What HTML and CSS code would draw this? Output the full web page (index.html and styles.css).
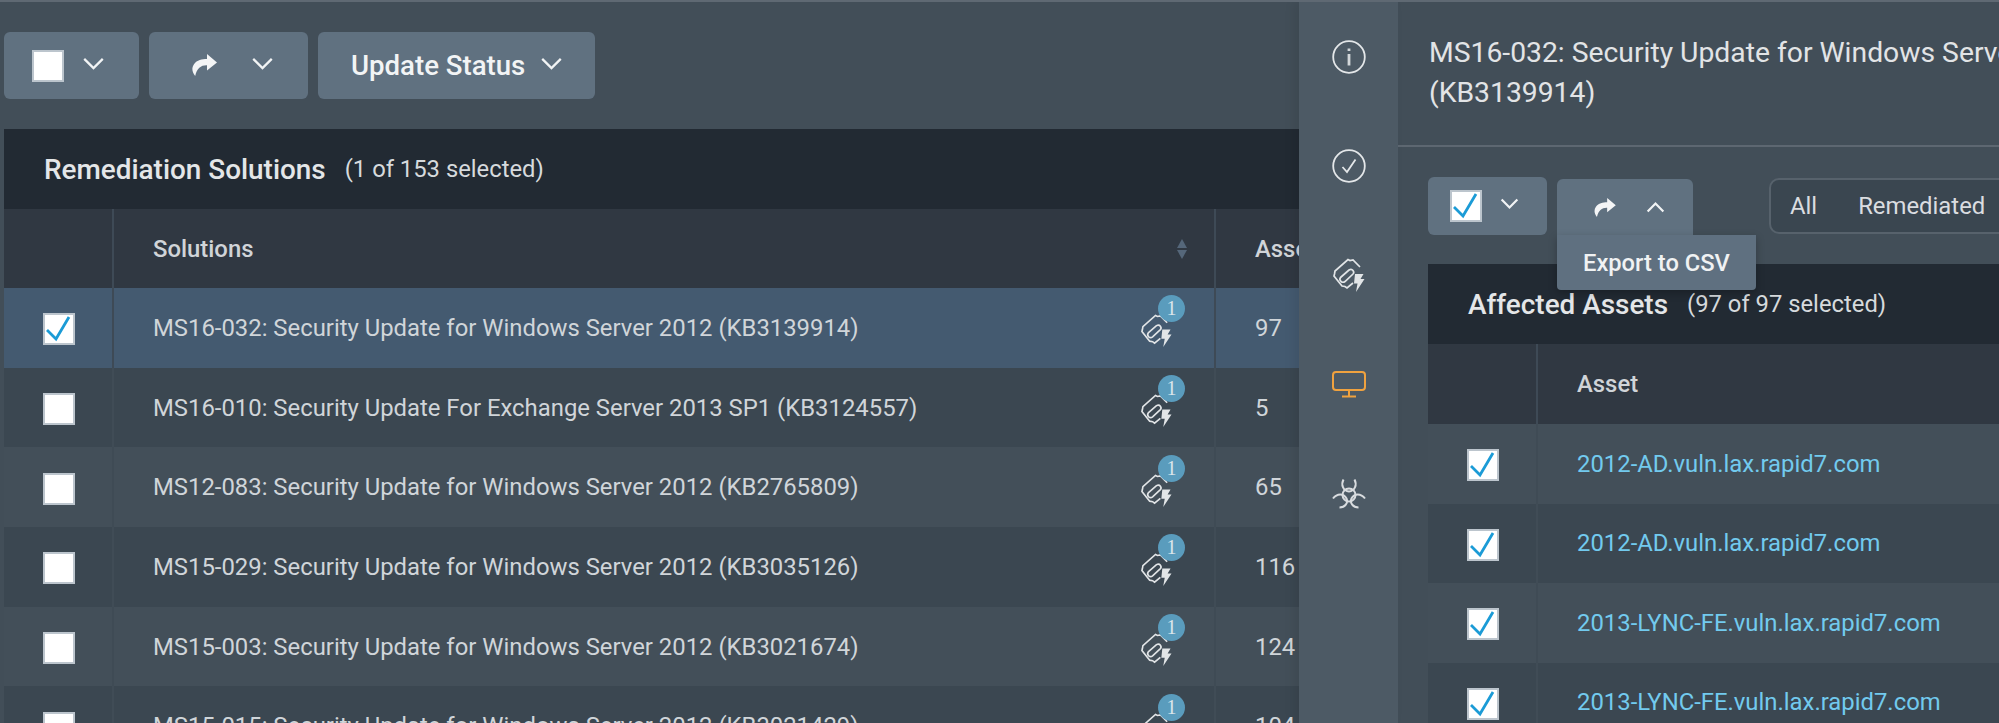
FILE: index.html
```html
<!DOCTYPE html>
<html lang="en">
<head>
<meta charset="utf-8">
<title>Remediation Solutions</title>
<link rel="stylesheet" href="styles.css">
</head>
<body>
<svg class="defs" width="0" height="0" aria-hidden="true">
  <symbol id="i-down" viewBox="0 0 24 14"><polyline points="2,2 12,12 22,2"/></symbol>
  <symbol id="i-up" viewBox="0 0 24 14"><polyline points="2,12 12,2 22,12"/></symbol>
  <symbol id="i-share" viewBox="0 0 25 22"><path d="M15 0 L25 8.5 L15 16.5 V11.2 C9 11 5 14 3.2 22 C0 18 -.6 14 2 10.2 C5 6 10 5 15 5 Z"/></symbol>
  <symbol id="i-check" viewBox="0 0 32 32"><polyline points="4,17 13,26 26,4"/></symbol>
  <symbol id="i-clip" viewBox="8 8 33 35">
    <path class="ln" d="M36 17 L29 10 L26 10.500 L24 9.500 L11 21 L10.500 24 L10 26 L18 36 L21 36.500 L23 38 L29 33"/>
    <path class="ln" d="M16.500 27.500 L25 20 Q27.500 18.500 29 20.500 Q30.500 22.500 29 24 L21 31.500 Q19 33 17 31.500 Q15 29.500 16.500 27.500 Z"/>
    <path class="fl" d="M31 24 H39.500 L36.500 29 H40.500 L32 42 L33.500 33.500 H30 Z"/>
  </symbol>
</svg>

<div class="app">
  <section class="main">
    <div class="toolbar">
      <button class="btn btn-select"><span class="cb"></span><svg class="chev"><use href="#i-down"/></svg></button>
      <button class="btn btn-share"><svg class="share"><use href="#i-share"/></svg><svg class="chev"><use href="#i-down"/></svg></button>
      <button class="btn btn-status">Update Status<svg class="chev"><use href="#i-down"/></svg></button>
    </div>
    <div class="tbl-title"><h2>Remediation Solutions</h2><span class="count">(1 of 153 selected)</span></div>
    <div class="row head">
      <div class="cell cell-check"></div>
      <div class="cell cell-name">Solutions
        <span class="sort"><i class="up"></i><i class="down"></i></span>
      </div>
      <div class="cell cell-num">Assets</div>
    </div>
    <div class="row selected">
      <div class="cell cell-check"><span class="cb"><svg class="tick"><use href="#i-check"/></svg></span></div>
      <div class="cell cell-name">MS16-032: Security Update for Windows Server 2012 (KB3139914)<span class="fix"><svg class="clip"><use href="#i-clip"/></svg><b class="badge">1</b></span></div>
      <div class="cell cell-num">97</div>
    </div>
    <div class="row dark">
      <div class="cell cell-check"><span class="cb"></span></div>
      <div class="cell cell-name">MS16-010: Security Update For Exchange Server 2013 SP1 (KB3124557)<span class="fix"><svg class="clip"><use href="#i-clip"/></svg><b class="badge">1</b></span></div>
      <div class="cell cell-num">5</div>
    </div>
    <div class="row light">
      <div class="cell cell-check"><span class="cb"></span></div>
      <div class="cell cell-name">MS12-083: Security Update for Windows Server 2012 (KB2765809)<span class="fix"><svg class="clip"><use href="#i-clip"/></svg><b class="badge">1</b></span></div>
      <div class="cell cell-num">65</div>
    </div>
    <div class="row dark">
      <div class="cell cell-check"><span class="cb"></span></div>
      <div class="cell cell-name">MS15-029: Security Update for Windows Server 2012 (KB3035126)<span class="fix"><svg class="clip"><use href="#i-clip"/></svg><b class="badge">1</b></span></div>
      <div class="cell cell-num">116</div>
    </div>
    <div class="row light">
      <div class="cell cell-check"><span class="cb"></span></div>
      <div class="cell cell-name">MS15-003: Security Update for Windows Server 2012 (KB3021674)<span class="fix"><svg class="clip"><use href="#i-clip"/></svg><b class="badge">1</b></span></div>
      <div class="cell cell-num">124</div>
    </div>
    <div class="row dark">
      <div class="cell cell-check"><span class="cb"></span></div>
      <div class="cell cell-name">MS15-015: Security Update for Windows Server 2012 (KB3021429)<span class="fix"><svg class="clip"><use href="#i-clip"/></svg><b class="badge">1</b></span></div>
      <div class="cell cell-num">104</div>
    </div>
  </section>

  <nav class="rail">
    <div class="rail-item">
      <svg class="r-icon" viewBox="0 0 34 34"><circle cx="17" cy="17" r="15.800"/><line x1="17" y1="14" x2="17" y2="25.500" class="thick"/><line x1="17" y1="8.500" x2="17" y2="11" class="thick"/></svg>
    </div>
    <div class="rail-item">
      <svg class="r-icon" viewBox="0 0 34 34"><circle cx="17" cy="17" r="15.800"/><polyline points="10.500,18 15,23 23.500,10.500"/></svg>
    </div>
    <div class="rail-item"><svg class="r-clip"><use href="#i-clip"/></svg></div>
    <div class="rail-item">
      <svg class="r-mon" viewBox="0 0 34 27"><rect x="1" y="1" width="32" height="18" rx="3"/><line x1="17" y1="19" x2="17" y2="25"/><line x1="10" y1="25.500" x2="24" y2="25.500"/></svg>
    </div>
    <div class="rail-item">
      <svg class="r-bio" viewBox="0 0 34 31">
        <circle cx="17" cy="17" r="6.500"/>
        <path d="M11.500 1.500 C8.500 7 11.500 13 17 13.500 C22.500 13 25.500 7 22.500 1.500"/>
        <path d="M1 20.500 C5 15 12 15 14.500 20.500 C16.500 25 13 29.500 7.500 29.500"/>
        <path d="M33 20.500 C29 15 22 15 19.500 20.500 C17.500 25 21 29.500 26.500 29.500"/>
      </svg>
    </div>
  </nav>

  <section class="detail">
    <header class="detail-head">MS16-032: Security Update for Windows Server 2012<br>(KB3139914)</header>
    <div class="controls">
      <button class="btn d-select"><span class="cb"><svg class="tick"><use href="#i-check"/></svg></span><svg class="chev-s"><use href="#i-down"/></svg></button>
      <div class="d-share-wrap">
        <button class="btn d-share"><svg class="share-s"><use href="#i-share"/></svg><svg class="chev-s"><use href="#i-up"/></svg></button>
        <div class="menu">Export to CSV</div>
      </div>
      <div class="segment"><span>All</span><span>Remediated</span></div>
    </div>
    <div class="tbl-title d-title"><h2>Affected Assets</h2><span class="count">(97 of 97 selected)</span></div>
    <div class="row d-row head">
      <div class="cell cell-check"></div>
      <div class="cell cell-asset">Asset</div>
    </div>
    <div class="row d-row light">
      <div class="cell cell-check"><span class="cb"><svg class="tick"><use href="#i-check"/></svg></span></div>
      <div class="cell cell-asset"><a href="#">2012-AD.vuln.lax.rapid7.com</a></div>
    </div>
    <div class="row d-row dark">
      <div class="cell cell-check"><span class="cb"><svg class="tick"><use href="#i-check"/></svg></span></div>
      <div class="cell cell-asset"><a href="#">2012-AD.vuln.lax.rapid7.com</a></div>
    </div>
    <div class="row d-row light">
      <div class="cell cell-check"><span class="cb"><svg class="tick"><use href="#i-check"/></svg></span></div>
      <div class="cell cell-asset"><a href="#">2013-LYNC-FE.vuln.lax.rapid7.com</a></div>
    </div>
    <div class="row d-row dark">
      <div class="cell cell-check"><span class="cb"><svg class="tick"><use href="#i-check"/></svg></span></div>
      <div class="cell cell-asset"><a href="#">2013-LYNC-FE.vuln.lax.rapid7.com</a></div>
    </div>
  </section>
</div>
</body>
</html>
```

FILE: styles.css
```css
* { box-sizing: border-box; }
html, body { margin: 0; height: 723px; overflow: hidden; background: #424e58; }
body { font-family: Roboto, "Liberation Sans", sans-serif; font-size: 23.870px; color: #d0d5d9; }
.defs { position: absolute; }

.app { display: flex; height: 723px; border-top: 2px solid #5f6973; overflow: hidden; }

.main { width: 1299px; flex: none; overflow: hidden; background: #424e58; }
.toolbar { display: flex; gap: 10px; padding: 30px 0 30px 4px; height: 127px; }

.btn { display: flex; align-items: center; border: 0; border-radius: 6px; background: #607180; color: #f2f4f5; font: inherit; padding: 0; }
.toolbar .btn { height: 67px; }
.btn-select { padding: 0 34px 0 28px; gap: 18px; }
.btn-share { padding: 0 34px 0 43px; gap: 34px; }
.btn-status { padding: 0 32px 0 33px; gap: 15px; font-size: 27.6px; font-weight: 500; }

.chev { width: 23px; height: 13px; margin-top: -4px; }
.chev-s { width: 19px; height: 11px; }
.chev use { fill: none; stroke: #f2f4f5; stroke-width: 2.4; }
.chev-s use { fill: none; stroke: #f2f4f5; stroke-width: 2.8; }
.share { width: 25px; height: 22px; margin-top: -1px; fill: #f4f5f6; }
.share-s { width: 22px; height: 19px; fill: #f4f5f6; }

.cb { display: block; width: 32px; height: 32px; flex: none; background: #fff; border: 2px solid #bcc5cd; position: relative; }
.tick { position: absolute; left: -2px; top: -2px; width: 32px; height: 32px; }
.tick use { fill: none; stroke: #1b9bd6; stroke-width: 2.8; }

.tbl-title { display: flex; align-items: center; gap: 19px; height: 80px; margin-left: 4px; padding-left: 40px; background: #222a33; white-space: nowrap; }
.tbl-title h2 { margin: 0; font-size: 27.9px; font-weight: 500; color: #e4e6e8; }
.count { font-size: 23.8px; color: #d6dadd; }

.row { display: grid; grid-template-columns: 110px 1102px 1fr; height: 79.7px; margin-left: 4px; }
.row.head { background: #303842; height: 79px; font-weight: 500; color: #d0d4d8; }
.row.selected { background: #445a70; }
.row.dark { background: #3b4751; }
.row.light { background: #434f59; }

.cell { display: flex; align-items: center; min-width: 0; white-space: nowrap; }
.cell-check { justify-content: center; padding-left: 1px; border-right: 2px solid #3e4a56; }
.cell-check .cb { margin-top: 3px; }
.cell-name { padding-left: 39px; padding-right: 42px; border-right: 2px solid #3e4a56; }
.cell-num { padding-left: 39px; }
.dark .cell-check, .dark .cell-name { border-right-color: #404c56; }
.light .cell-check, .light .cell-name { border-right-color: #3f4b55; }

.sort { margin-left: auto; margin-right: -15px; display: flex; flex-direction: column; gap: 2px; }
.sort i { display: block; width: 0; height: 0; border-left: 5px solid transparent; border-right: 5px solid transparent; }
.sort .up { border-bottom: 9px solid #55677a; }
.sort .down { border-top: 9px solid #55677a; }

.fix { position: relative; margin-left: auto; width: 32px; height: 34px; margin-top: 7px; }
.clip { display: block; width: 32px; height: 34px; }
.ln { fill: none; stroke: #e2e5e7; stroke-width: 1.7; }
.fl { fill: #e2e5e7; }
.badge { position: absolute; top: -19px; right: -13px; width: 27px; height: 27px; border-radius: 50%; background: #5a9cbd; color: #dbe6ec; font: 400 20px/27px "Liberation Serif", serif; text-align: center; }

.rail { width: 99px; flex: none; background: #4d5a65; box-shadow: -5px 0 10px rgba(0,0,0,.08); position: relative; }
.rail-item { height: 109.250px; display: flex; align-items: center; justify-content: center; }
.r-icon { width: 34px; height: 34px; fill: none; stroke: #e4e7e9; stroke-width: 1.800; }
.r-icon .thick { stroke-width: 2.800; stroke: #d3d7da; }
.r-clip { width: 33px; height: 35px; }
.r-mon { width: 34px; height: 27px; fill: none; stroke: #f0a23f; stroke-width: 2; }
.r-bio { width: 34px; height: 31px; fill: none; stroke: #d9dcdf; stroke-width: 2; }

.detail { flex: 1; min-width: 0; overflow: hidden; background: #424e58; }
.detail-head { height: 145px; padding: 31px 0 0 31px; border-bottom: 2px solid #5d6771; font-size: 28.3px; line-height: 40px; white-space: nowrap; color: #e2e4e6; }

.controls { display: flex; align-items: flex-start; height: 117px; padding: 30px 0 0 30px; white-space: nowrap; }
.d-select { height: 58px; padding: 0 28px 0 22px; gap: 18px; }
.d-select .chev-s { margin-top: -6px; }
.d-share-wrap { position: relative; margin: 2px 0 0 10px; }
.d-share { height: 56px; padding: 0 28px 0 37px; gap: 30px; border-radius: 6px 6px 0 0; }
.menu { position: absolute; left: 0; top: 100%; width: 199px; height: 55px; padding-left: 26px; display: flex; align-items: center; background: #5f7080; border-radius: 0 0 4px 4px; box-shadow: 0 3px 8px rgba(0,0,0,.25); color: #f0f2f3; font-weight: 500; font-size: 23.7px; z-index: 2; }
.segment { display: flex; flex: none; gap: 41px; align-items: center; height: 56px; margin: 1px 0 0 76px; padding: 0 60px 0 19px; border: 2px solid #57626c; border-radius: 10px; background: #3a4650; color: #dadde0; }

.d-title { margin-left: 30px; }
.d-row { margin-left: 30px; grid-template-columns: 110px 1fr; height: 79.5px; }
.row.d-row.head { height: 80px; }
.cell-asset { padding-left: 39px; }
.cell-asset a { color: #72caee; text-decoration: none; }
```
